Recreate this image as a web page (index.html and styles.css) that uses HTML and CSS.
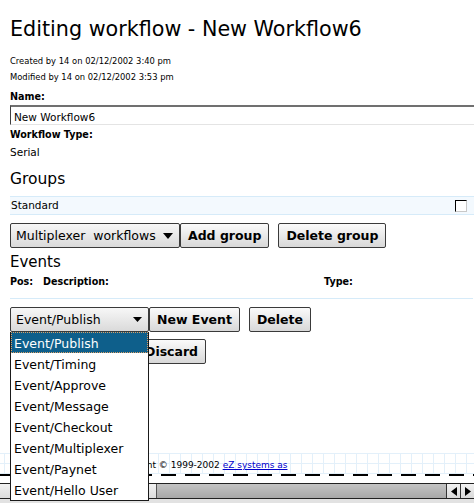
FILE: index.html
```html
<!DOCTYPE html>
<html>
<head>
<meta charset="utf-8">
<title>Editing workflow</title>
<link rel="stylesheet" href="styles.css">
</head>
<body>
<div class="page">
  <h1 class="title">Editing workflow - New Workflow6</h1>
  <p class="meta">Created by 14 on 02/12/2002 3:40 pm</p>
  <p class="meta">Modified by 14 on 02/12/2002 3:53 pm</p>
  <div class="label label-name">Name:</div>
  <input class="text-input" type="text" value="New Workflow6">
  <div class="label label-type">Workflow Type:</div>
  <div class="value">Serial</div>
  <h2 class="section section-groups">Groups</h2>
  <div class="list-row">
    <span class="list-name">Standard</span>
    <span class="checkbox"></span>
  </div>
  <div class="controls controls-groups">
    <div class="select select-groups"><span>Multiplexer&nbsp; workflows</span><svg class="arrow" width="10" height="6" viewBox="0 0 10 6"><path d="M0 0H10L5 6Z"/></svg></div>
    <button class="btn">Add group</button>
    <button class="btn btn-gap">Delete group</button>
  </div>
  <h2 class="section section-events">Events</h2>
  <div class="head-row">
    <span class="col-pos">Pos:</span>
    <span class="col-desc">Description:</span>
    <span class="col-type">Type:</span>
  </div>
  <div class="controls controls-events">
    <div class="select-wrap">
      <div class="select select-events"><span>Event/Publish</span><svg class="arrow" width="9" height="5" viewBox="0 0 9 5"><path d="M0 0H9L4.5 5Z"/></svg></div>
      <ul class="dropdown">
        <li class="option option-active">Event/Publish</li>
        <li class="option">Event/Timing</li>
        <li class="option">Event/Approve</li>
        <li class="option">Event/Message</li>
        <li class="option">Event/Checkout</li>
        <li class="option">Event/Multiplexer</li>
        <li class="option">Event/Paynet</li>
        <li class="option">Event/Hello User</li>
      </ul>
    </div>
    <button class="btn">New Event</button>
    <button class="btn btn-gap">Delete</button>
  </div>
  <div class="controls controls-store">
    <button class="btn btn-store">Store</button>
    <button class="btn btn-gap">Discard</button>
  </div>
</div>
<footer class="footer">
  <div class="copyright">Copyright &copy; 1999-2002 <a href="#" class="link">eZ systems as</a></div>
  <div class="dashes"></div>
</footer>
<div class="hscroll">
  <div class="hscroll-thumb"></div>
  <div class="hscroll-track"></div>
  <div class="hscroll-btn"><svg width="6" height="9" viewBox="0 0 6 9"><path d="M6 0V9L0 4.5Z"/></svg></div>
  <div class="hscroll-btn"><svg width="6" height="9" viewBox="0 0 6 9"><path d="M0 0V9L6 4.5Z"/></svg></div>
</div>
<div class="bottom-strip"></div>
</body>
</html>
```

FILE: styles.css
```css
html, body {
  margin: 0;
  padding: 0;
  overflow: hidden;
  background: #fff;
}
body {
  width: 474px;
  font-family: "DejaVu Sans", Verdana, sans-serif;
  color: #000;
}
.page {
  padding-left: 10px;
  width: 464px;
}
.title {
  margin: 16px 0 11px;
  font-size: 20.7px;
  line-height: 26px;
  font-weight: normal;
  white-space: nowrap;
}
.meta {
  margin: 0;
  font-size: 8.4px;
  line-height: 16px;
  white-space: nowrap;
}
.label {
  font-size: 9.6px;
  font-weight: bold;
  line-height: 14px;
}
.label-name { margin-top: 5px; }
.label-type { margin-top: 3px; }
.text-input {
  display: block;
  box-sizing: border-box;
  margin: 1px 0 0;
  width: 480px;
  height: 20px;
  padding: 3px 3px 0;
  font-family: "DejaVu Sans", sans-serif;
  font-size: 10.5px;
  color: #000;
  background: #fff;
  border-top: 2px solid #707070;
  border-left: 1px solid #404040;
  border-right: 1px solid #e4e4e4;
  border-bottom: 1px solid #e4e4e4;
  outline: none;
}
.value {
  margin-top: 3px;
  font-size: 10.5px;
  line-height: 14px;
}
.section {
  margin: 0;
  font-size: 15.5px;
  line-height: 20px;
  font-weight: normal;
}
.section-groups { margin-top: 10px; }
.section-events { margin-top: 4px; font-size: 15px; }
.list-row {
  margin-top: 7px;
  box-sizing: border-box;
  height: 19px;
  display: flex;
  align-items: center;
  justify-content: space-between;
  background: #f3f9fe;
  border-top: 1px solid #d6ebf9;
  border-bottom: 1px solid #d6ebf9;
  font-size: 10.5px;
  line-height: 17px;
}
.list-name { padding-left: 1px; }
.checkbox {
  box-sizing: border-box;
  width: 12px;
  height: 12px;
  margin-right: 7px;
  background: #fff;
  border-top: 1px solid #000;
  border-left: 1px solid #000;
  border-right: 1px solid #c8c8c8;
  border-bottom: 1px solid #c8c8c8;
}
.controls {
  display: flex;
  align-items: flex-start;
  height: 25px;
}
.controls-groups { margin-top: 8px; }
.controls-events { margin-top: 8px; }
.controls-store { margin-top: 7px; }
.select {
  box-sizing: border-box;
  height: 25px;
  display: flex;
  align-items: center;
  justify-content: space-between;
  padding: 0 6px 0 5px;
  border: 1px solid #3a3a3a;
  border-radius: 2px;
  background: linear-gradient(#f7f7f7, #dadada);
  font-size: 12.5px;
  white-space: nowrap;
}
.select-groups { width: 170px; }
.select-events { width: 139px; }
.arrow { fill: #000; flex: none; }
.select-wrap {
  position: relative;
}
.dropdown {
  position: absolute;
  top: 100%;
  left: 0;
  z-index: 5;
  box-sizing: border-box;
  width: 139px;
  margin: 0;
  padding: 0;
  list-style: none;
  background: #fff;
  border: 1px solid #1a1a1a;
  border-top: none;
}
.option {
  box-sizing: border-box;
  height: 21px;
  padding: 1px 0 0 3px;
  font-size: 12.5px;
  line-height: 21px;
  white-space: nowrap;
}
.option-active {
  background: #0e5f8b;
  color: #fff;
  outline: 1px dotted #d9a066;
  outline-offset: -1px;
}
.btn {
  box-sizing: border-box;
  height: 25px;
  padding: 0 7px;
  margin: 0;
  border: 1px solid #3a3a3a;
  border-radius: 2px;
  background: linear-gradient(#fafafa, #d8d8d8);
  font-family: "DejaVu Sans", sans-serif;
  font-size: 12.5px;
  font-weight: bold;
  color: #000;
  white-space: nowrap;
}
.btn-gap { margin-left: 9px; }
.btn-store { width: 118px; }
.head-row {
  margin-top: 3px;
  display: flex;
  box-sizing: border-box;
  height: 24px;
  width: 463px;
  border-bottom: 1px solid #d6ebf9;
  font-size: 9.6px;
  font-weight: bold;
  line-height: 14px;
}
.col-pos { width: 33px; }
.col-desc { width: 281px; }
.footer {
  margin-top: 89px;
}
.copyright {
  box-sizing: border-box;
  height: 21px;
  padding: 3px 0 0 112px;
  font-size: 9px;
  line-height: 18px;
  white-space: nowrap;
  background-image:
    linear-gradient(to right, #e3f0fa 1px, transparent 1px),
    linear-gradient(to bottom, #e3f0fa 1px, transparent 1px);
  background-size: 11px 10px;
  background-position: 4px 0, 0 0;
}
.link {
  color: #0000cc;
  text-decoration: underline;
}
.dashes {
  height: 2px;
  background-image: repeating-linear-gradient(to right, #000 0 15px, transparent 15px 24px);
  background-position: 17px 0;
}
.hscroll {
  margin-top: 7px;
  box-sizing: border-box;
  height: 16px;
  display: flex;
  border-top: 1px solid #222;
  border-bottom: 1px solid #222;
}
.hscroll-thumb {
  width: 156px;
  background: linear-gradient(#f2f2f2, #dcdcdc);
  border-right: 1px solid #555;
}
.hscroll-track {
  flex: 1;
  background: linear-gradient(#c4c4c4, #a8a8a8);
}
.hscroll-btn {
  box-sizing: border-box;
  width: 14px;
  display: flex;
  align-items: center;
  justify-content: center;
  background: linear-gradient(#f2f2f2, #d8d8d8);
  border-left: 1px solid #333;
}
.hscroll-btn svg { fill: #000; }
.bottom-strip {
  height: 4px;
  background: #e2e2e2;
}
```
